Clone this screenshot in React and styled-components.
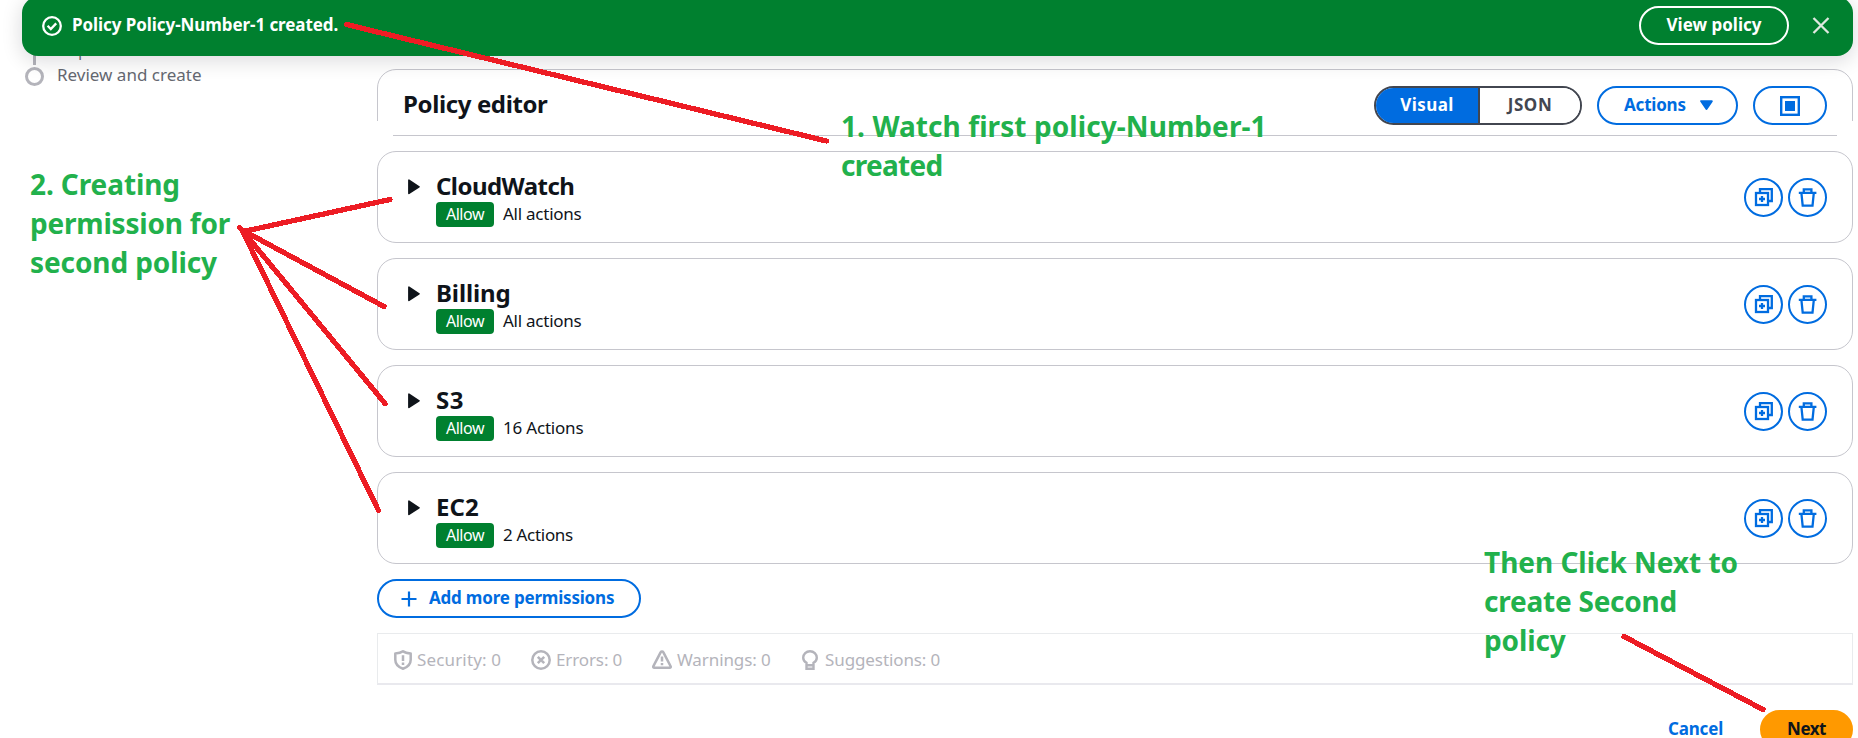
import React from 'react';
import styled, { createGlobalStyle, css } from 'styled-components';

const color = {
  blue: '#006ce0',
  green: '#00802f',
  ink: '#0f141a',
  muted: '#656871',
  border: '#c6c6cd',
  disabled: '#b4b4bb',
  segment: '#424650',
  orange: '#ff9900',
  noteGreen: '#22b14c',
  noteRed: '#ed1c24',
};

const GlobalStyle = createGlobalStyle`
  *, *::before, *::after { box-sizing: border-box; }
  body {
    margin: 0;
    background: #fff;
    color: ${color.ink};
    font: 400 17px/24px 'Noto Sans', 'Open Sans', sans-serif;
  }
  svg { display: block; flex: none; }
`;

const Page = styled.div`
  position: relative;
  display: grid;
  grid-template-columns: 377px 1476px;
  width: 1858px;
  height: 738px;
  overflow: hidden;
`;

/* Text with its own letter spacing */
const Text = styled.span`
  letter-spacing: ${(p) => p.$track || 0}px;
  white-space: nowrap;
`;

/* Flash banner */
const Banner = styled.header`
  position: absolute;
  z-index: 2;
  top: -3px;
  left: 22px;
  right: 5px;
  height: 59px;
  display: flex;
  align-items: center;
  padding: 0 23px 2px 20px;
  border-radius: 16px;
  background: ${color.green};
  box-shadow: 0 4px 20px 1px rgba(0, 7, 22, 0.14);
  color: #fff;
`;

const BannerMessage = styled.div`
  flex: 1;
  padding: 0 0 2px 10px;
  font-weight: 700;
`;

const CloseButton = styled.button`
  display: flex;
  margin-left: 23px;
  padding: 0;
  border: 0;
  background: none;
  color: #dfe8e0;
`;

const PillButton = styled.button`
  display: flex;
  align-items: center;
  justify-content: ${(p) => (p.$start ? 'flex-start' : 'center')};
  gap: ${(p) => p.$gap || 0}px;
  width: ${(p) => p.$width}px;
  height: 39px;
  padding: 0 0 0 ${(p) => p.$start || 0}px;
  border: 2px solid currentColor;
  border-radius: 20px;
  background: none;
  color: ${(p) => (p.$inverse ? '#fff' : color.blue)};
  font: 700 17px/24px 'Noto Sans', sans-serif;
  ${Text} { padding-bottom: 2px; }
  ${(p) =>
    p.$primary &&
    css`
      border-color: ${color.orange};
      background: ${color.orange};
      color: ${color.ink};
    `}
`;

/* Wizard steps */
const Steps = styled.nav`
  padding: 36px 0 0 25px;
  color: ${color.muted};
`;

const Step = styled.div`
  display: grid;
  grid-template-columns: 19px auto;
  column-gap: 13px;
  justify-items: center;
  justify-content: start;
`;

const StepTrack = styled.span`
  width: 3px;
  height: 29px;
  background: ${color.disabled};
`;

const StepName = styled.span`
  justify-self: start;
  font-size: 14.5px;
  line-height: 29px;
`;

const StepMarker = styled.span`
  width: 19px;
  height: 19px;
  margin-top: 2px;
  border: 3px solid ${color.disabled};
  border-radius: 50%;
`;

const StepTitle = styled(Text)`
  justify-self: start;
  line-height: 20px;
`;

/* Editor */
const Editor = styled.main`
  display: flex;
  flex-direction: column;
  gap: 15px;
  padding-top: 69px;
`;

const EditorHeader = styled.div`
  position: relative;
  flex: none;
  display: flex;
  align-items: center;
  gap: 15px;
  height: 67px;
  padding: 6px 25px 0 25px;
  border: 1px solid ${color.border};
  border-radius: 19px 19px 0 0;

  &::before,
  &::after {
    content: '';
    position: absolute;
    bottom: -1px;
    width: 16px;
    height: 15px;
    background: #fff;
  }
  &::before { left: -1px; }
  &::after { right: -1px; }
`;

const EditorTitle = styled.h2`
  flex: 1;
  margin: 0;
  padding-bottom: 4px;
  font-size: 24px;
  line-height: 30px;
`;

const Segments = styled.div`
  display: flex;
  width: 208px;
  height: 39px;
  overflow: hidden;
  border: 2px solid ${color.segment};
  border-radius: 20px;
`;

const Segment = styled.button`
  width: ${(p) => (p.$active ? 104 : 100)}px;
  padding: 0 0 2px;
  border: 0;
  border-right: ${(p) => (p.$active ? `2px solid ${color.segment}` : 0)};
  background: ${(p) => (p.$active ? color.blue : '#fff')};
  color: ${(p) => (p.$active ? '#fff' : color.segment)};
  font: 700 17px/24px 'Noto Sans', sans-serif;
`;

const Card = styled.section`
  flex: none;
  display: flex;
  height: 92px;
  padding: 0 25px 0 30px;
  border: 1px solid ${color.border};
  border-radius: 19px;
`;

const CardBody = styled.div`
  flex: 1;
  padding: 18px 0 0 16px;
`;

const CardCaret = styled.div`
  padding-top: 27px;
`;

const CardTitle = styled.h3`
  margin: 0;
  font-size: 24px;
  line-height: 31px;
  height: 32px;
`;

const CardMeta = styled.div`
  display: flex;
  align-items: center;
  gap: 9px;
  ${Text} { padding-bottom: 1px; }
`;

const Badge = styled.span`
  display: flex;
  align-items: center;
  justify-content: center;
  width: 58px;
  height: 25px;
  border-radius: 4px;
  background: ${color.green};
  color: #fff;
  font-size: 16px;
  line-height: 24px;
`;

const CardActions = styled.div`
  display: flex;
  align-items: center;
  gap: 5px;
`;

const RoundButton = styled.button`
  display: flex;
  align-items: center;
  justify-content: center;
  width: 39px;
  height: 39px;
  padding: 0;
  border: 2px solid ${color.blue};
  border-radius: 50%;
  background: #fff;
  color: ${color.blue};
`;

/* Findings bar */
const Findings = styled.div`
  flex: none;
  display: grid;
  grid-template-columns: 137px 121px 150px auto;
  align-items: center;
  height: 52px;
  padding: 2px 0 0 16px;
  border: 1px solid #e9ebed;
  border-bottom: 2px solid #e9e9ee;
  color: ${color.disabled};
`;

const Finding = styled.div`
  display: flex;
  align-items: center;
  gap: ${(p) => p.$gap}px;
`;

const Footer = styled.footer`
  display: flex;
  justify-content: flex-end;
  align-items: flex-start;
  margin-top: 10px;
  gap: 37px;
  ${Text} { padding-bottom: 2px; }
`;

const LinkButton = styled.button`
  display: flex;
  align-items: center;
  height: 39px;
  padding: 0;
  border: 0;
  background: none;
  color: ${color.blue};
  font: 700 17px/24px 'Noto Sans', sans-serif;
`;

/* Notes drawn over the page */
const Note = styled.div`
  position: absolute;
  z-index: 3;
  top: ${(p) => p.$top}px;
  left: ${(p) => p.$left}px;
  display: flex;
  flex-direction: column;
  color: ${color.noteGreen};
  font-size: 28px;
  font-weight: 700;
  line-height: 39px;
`;

const Strokes = styled.svg`
  position: absolute;
  z-index: 4;
  top: 0;
  left: 0;
  pointer-events: none;
`;

const CheckIcon = () => (
  <svg width="20" height="20" viewBox="0 0 20 20" fill="none" stroke="#fff" strokeWidth="2.3">
    <circle cx="10" cy="10" r="8.8" />
    <path d="M5.6 9.8 8.8 13l5.4-5.6" />
  </svg>
);

const CloseIcon = () => (
  <svg width="18" height="18" viewBox="0 0 18 18" fill="none" stroke="currentColor" strokeWidth="2.3">
    <path d="M1.5 1 16.5 16M16.5 1 1.5 16" />
  </svg>
);

const DownIcon = () => (
  <svg width="13" height="11" viewBox="0 0 13 11" fill="currentColor" stroke="currentColor" strokeLinejoin="round" strokeWidth="2">
    <path d="M1.2 1.2h10.6L6.5 9z" />
  </svg>
);

const RightIcon = () => (
  <svg width="12" height="16" viewBox="0 0 12 16" fill={color.ink} stroke={color.ink} strokeLinejoin="round" strokeWidth="1.6">
    <path d="M.9 1.2v13.2L11 7.8z" />
  </svg>
);

const PanelIcon = () => (
  <svg width="20" height="20" viewBox="0 0 20 20" fill="none">
    <rect x="1.2" y="1.2" width="17.6" height="17.6" stroke="currentColor" strokeWidth="2.4" />
    <rect x="5" y="5" width="10" height="10" fill="currentColor" />
  </svg>
);

const CopyIcon = () => (
  <svg width="19" height="19" viewBox="0 0 19 19" fill="none" stroke="currentColor" strokeWidth="2.3">
    <rect x="2" y="5" width="12" height="12" />
    <path d="M6 5V1.2h11.8V13h-4M8 8v6M5 11h6" />
  </svg>
);

const TrashIcon = () => (
  <svg width="19" height="19" viewBox="0 0 19 19" fill="none" stroke="currentColor" strokeWidth="2.3">
    <path d="M.8 4.8h17.6M5.8 4.5V1.3h7.6v3.2M3.4 5l1.3 12.7h9.8L15.8 5" />
  </svg>
);

const PlusIcon = () => (
  <svg width="16" height="16" viewBox="0 0 16 16" fill="none" stroke="currentColor" strokeWidth="2.2">
    <path d="M8 .5v15M.5 8h15" />
  </svg>
);

const ShieldIcon = () => (
  <svg width="18" height="20" viewBox="0 0 18 20" fill="none" stroke="currentColor" strokeWidth="2.5" strokeLinejoin="round">
    <path d="M9 1.3C7 2.9 4.4 3.4 1.3 3.4v6.4C1.3 14 4.4 17.2 9 18.7c4.6-1.5 7.7-4.7 7.7-8.9V3.4C13.6 3.4 11 2.9 9 1.3z" />
    <path d="M9 5.3v5.6M9 12.6v2.3" />
  </svg>
);

const ErrorIcon = () => (
  <svg width="20" height="20" viewBox="0 0 20 20" fill="none" stroke="currentColor" strokeWidth="2.5">
    <circle cx="10" cy="10" r="8.7" />
    <path d="m6.8 6.8 6.4 6.4M13.2 6.8l-6.4 6.4" />
  </svg>
);

const WarningIcon = () => (
  <svg width="20" height="20" viewBox="0 0 20 20" fill="none" stroke="currentColor" strokeWidth="2.5" strokeLinejoin="round">
    <path d="M10 1.6c-.7 0-1.1.3-1.4.8L1.4 16.2c-.4.8 0 1.6.9 1.6h15.4c.9 0 1.3-.8.9-1.6L11.4 2.4c-.3-.5-.7-.8-1.4-.8z" />
    <path d="M10 6.5v5M10 13v2.3" />
  </svg>
);

const BulbIcon = () => (
  <svg width="16" height="20" viewBox="0 0 16 20" fill="none" stroke="currentColor" strokeWidth="2.4">
    <path d="M4.5 12.8C2.4 11.6 1.2 9.8 1.2 7.7 1.2 4 4.2 1.2 8 1.2s6.8 2.8 6.8 6.5c0 2.1-1.2 3.9-3.3 5.1v6h-7zM4.5 15.2h7" />
  </svg>
);

const permissions = [
  { service: 'CloudWatch', track: -0.55, actions: 'All actions', actionsTrack: -0.25 },
  { service: 'Billing', track: -0.1, actions: 'All actions', actionsTrack: -0.25 },
  { service: 'S3', track: 0.6, actions: '16 Actions', actionsTrack: -0.2 },
  { service: 'EC2', track: 0.1, actions: '2 Actions', actionsTrack: -0.3 },
];

const PermissionCard = ({ service, track, actions, actionsTrack }) => (
  <Card>
    <CardCaret><RightIcon /></CardCaret>
    <CardBody>
      <CardTitle><Text $track={track}>{service}</Text></CardTitle>
      <CardMeta>
        <Badge><Text $track={-0.45}>Allow</Text></Badge>
        <Text $track={actionsTrack}>{actions}</Text>
      </CardMeta>
    </CardBody>
    <CardActions>
      <RoundButton aria-label="Duplicate"><CopyIcon /></RoundButton>
      <RoundButton aria-label="Remove"><TrashIcon /></RoundButton>
    </CardActions>
  </Card>
);

export default function App() {
  return (
    <Page>
      <GlobalStyle />
      <Banner>
        <CheckIcon />
        <BannerMessage><Text $track={-0.07}>Policy Policy-Number-1 created.</Text></BannerMessage>
        <PillButton $inverse $width={150}><Text>View policy</Text></PillButton>
        <CloseButton aria-label="Dismiss"><CloseIcon /></CloseButton>
      </Banner>

      <Steps>
        <Step>
          <StepTrack />
          <StepName>Step</StepName>
          <StepMarker />
          <StepTitle>Review and create</StepTitle>
        </Step>
      </Steps>

      <Editor>
        <EditorHeader>
          <EditorTitle><Text $track={-0.38}>Policy editor</Text></EditorTitle>
          <Segments>
            <Segment $active><Text $track={0.4}>Visual</Text></Segment>
            <Segment><Text $track={0.6}>JSON</Text></Segment>
          </Segments>
          <PillButton $width={141} $start={25} $gap={14}>
            <Text $track={-0.2}>Actions</Text>
            <DownIcon />
          </PillButton>
          <PillButton $width={74} aria-label="Toggle panel"><PanelIcon /></PillButton>
        </EditorHeader>

        {permissions.map((p) => <PermissionCard key={p.service} {...p} />)}

        <PillButton $width={264} $start={22} $gap={12}>
          <PlusIcon />
          <Text $track={-0.2}>Add more permissions</Text>
        </PillButton>

        <Findings>
          <Finding $gap={5}><ShieldIcon /><Text $track={0.15}>Security: 0</Text></Finding>
          <Finding $gap={5}><ErrorIcon /><Text $track={-0.12}>Errors: 0</Text></Finding>
          <Finding $gap={5}><WarningIcon /><Text $track={-0.1}>Warnings: 0</Text></Finding>
          <Finding $gap={7}><BulbIcon /><Text $track={-0.1}>Suggestions: 0</Text></Finding>
        </Findings>

        <Footer>
          <LinkButton><Text $track={-0.2}>Cancel</Text></LinkButton>
          <PillButton $primary $width={93}><Text $track={-0.5}>Next</Text></PillButton>
        </Footer>
      </Editor>

      <Note $top={107} $left={841}>
        <Text $track={0.08}>1. Watch first policy-Number-1</Text>
        <Text $track={-0.7}>created</Text>
      </Note>
      <Note $top={165} $left={30}>
        <Text $track={-0.1}>2. Creating</Text>
        <Text $track={-0.2}>permission for</Text>
        <Text $track={-0.1}>second policy</Text>
      </Note>
      <Note $top={543} $left={1484}>
        <Text $track={-0.03}>Then Click Next to</Text>
        <Text $track={-0.23}>create Second</Text>
        <Text $track={-0.1}>policy</Text>
      </Note>

      <Strokes
        width="1858"
        height="738"
        fill="none"
        stroke={color.noteRed}
        strokeWidth="5.3"
        strokeLinecap="round"
        shapeRendering="crispEdges"
      >
        <path d="M346.5 24.5 826.5 141" />
        <path d="M239.5 227.5l4 4L390 199.5" />
        <path d="M242 230 384 306.5" />
        <path d="M242 230 385 403.5" />
        <path d="M242 230 378.5 510.5" />
        <path d="M1624 636.5 1763 709.5" />
      </Strokes>
    </Page>
  );
}
